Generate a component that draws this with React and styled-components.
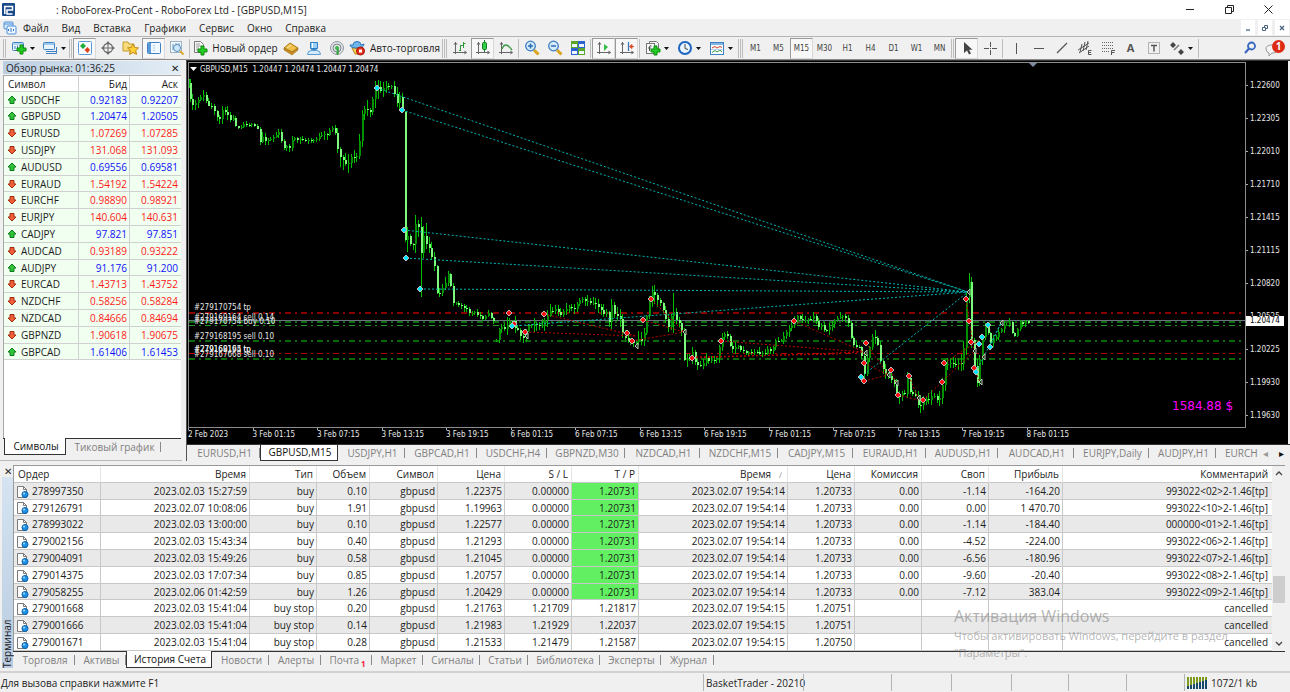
import styled, { createGlobalStyle, css } from "styled-components";

const GlobalStyle = createGlobalStyle`
  * {
    box-sizing: border-box;
  }
  body {
    margin: 0;
    background: #f0f0f0;
    color: #1c1c1c;
    font-family: "Open Sans", "Noto Sans", sans-serif;
    font-size: 10px;
    line-height: 14px;
    overflow: hidden;
  }
  button {
    font: inherit;
    color: inherit;
    background: none;
    border: none;
    padding: 0;
    margin: 0;
    cursor: default;
  }
`;

/* ---------- data ---------- */

const menuItems = ["Файл", "Вид", "Вставка", "Графики", "Сервис", "Окно", "Справка"];
const periods = ["M1", "M5", "M15", "M30", "H1", "H4", "D1", "W1", "MN"];

const quotes = [
  ["USDCHF", "0.92183", "0.92207", true],
  ["GBPUSD", "1.20474", "1.20505", true],
  ["EURUSD", "1.07269", "1.07285", false],
  ["USDJPY", "131.068", "131.093", false],
  ["AUDUSD", "0.69556", "0.69581", true],
  ["EURAUD", "1.54192", "1.54224", false],
  ["EURCHF", "0.98890", "0.98921", false],
  ["EURJPY", "140.604", "140.631", false],
  ["CADJPY", "97.821", "97.851", true],
  ["AUDCAD", "0.93189", "0.93222", false],
  ["AUDJPY", "91.176", "91.200", true],
  ["EURCAD", "1.43713", "1.43752", false],
  ["NZDCHF", "0.58256", "0.58284", false],
  ["NZDCAD", "0.84666", "0.84694", false],
  ["GBPNZD", "1.90618", "1.90675", false],
  ["GBPCAD", "1.61406", "1.61453", true],
];

const chartTabs = [
  ["EURUSD,H1", 73],
  ["GBPUSD,M15", 78],
  ["USDJPY,H1", 67],
  ["GBPCAD,H1", 72],
  ["USDCHF,H4", 70],
  ["GBPNZD,M30", 78],
  ["NZDCAD,H1", 75],
  ["NZDCHF,M15", 78],
  ["CADJPY,M15", 75],
  ["EURAUD,H1", 73],
  ["AUDUSD,H1", 72],
  ["AUDCAD,H1", 76],
  ["EURJPY,Daily", 75],
  ["AUDJPY,H1", 67],
];

const priceLabels = [
  "1.22600", "1.22305", "1.22010", "1.21710", "1.21415", "1.21115",
  "1.20820", "1.20525", "1.20225", "1.19930", "1.19630",
];

const timeLabels = [
  "2 Feb 2023", "3 Feb 01:15", "3 Feb 07:15", "3 Feb 13:15", "3 Feb 19:15",
  "6 Feb 01:15", "6 Feb 07:15", "6 Feb 13:15", "6 Feb 19:15", "7 Feb 01:15",
  "7 Feb 07:15", "7 Feb 13:15", "7 Feb 19:15", "8 Feb 01:15",
];

const columns = [
  ["Ордер", 87],
  ["Время", 149],
  ["Тип", 67],
  ["Объем", 53],
  ["Символ", 68],
  ["Цена", 67],
  ["S / L", 67],
  ["T / P", 67],
  ["Время", 149],
  ["Цена", 67],
  ["Комиссия", 67],
  ["Своп", 67],
  ["Прибыль", 74],
  ["Комментарий", null],
];

const orders = [
  ["278997350", "2023.02.03 15:27:59", "buy", "0.10", "gbpusd", "1.22375", "0.00000", "1.20731", "2023.02.07 19:54:14", "1.20733", "0.00", "-1.14", "-164.20", "993022<02>2-1.46[tp]"],
  ["279126791", "2023.02.07 10:08:06", "buy", "1.91", "gbpusd", "1.19963", "0.00000", "1.20731", "2023.02.07 19:54:14", "1.20733", "0.00", "0.00", "1 470.70", "993022<10>2-1.46[tp]"],
  ["278993022", "2023.02.03 13:00:00", "buy", "0.10", "gbpusd", "1.22577", "0.00000", "1.20731", "2023.02.07 19:54:14", "1.20733", "0.00", "-1.14", "-184.40", "000000<01>2-1.46[tp]"],
  ["279002156", "2023.02.03 15:43:34", "buy", "0.40", "gbpusd", "1.21293", "0.00000", "1.20731", "2023.02.07 19:54:14", "1.20733", "0.00", "-4.52", "-224.00", "993022<06>2-1.46[tp]"],
  ["279004091", "2023.02.03 15:49:26", "buy", "0.58", "gbpusd", "1.21045", "0.00000", "1.20731", "2023.02.07 19:54:14", "1.20733", "0.00", "-6.56", "-180.96", "993022<07>2-1.46[tp]"],
  ["279014375", "2023.02.03 17:07:34", "buy", "0.85", "gbpusd", "1.20757", "0.00000", "1.20731", "2023.02.07 19:54:14", "1.20733", "0.00", "-9.60", "-20.40", "993022<08>2-1.46[tp]"],
  ["279058255", "2023.02.06 01:42:59", "buy", "1.26", "gbpusd", "1.20429", "0.00000", "1.20731", "2023.02.07 19:54:14", "1.20733", "0.00", "-7.12", "383.04", "993022<09>2-1.46[tp]"],
  ["279001668", "2023.02.03 15:41:04", "buy stop", "0.20", "gbpusd", "1.21763", "1.21709", "1.21817", "2023.02.07 19:54:15", "1.20751", "", "", "", "cancelled"],
  ["279001666", "2023.02.03 15:41:04", "buy stop", "0.14", "gbpusd", "1.21983", "1.21929", "1.22037", "2023.02.07 19:54:15", "1.20751", "", "", "", "cancelled"],
  ["279001671", "2023.02.03 15:41:04", "buy stop", "0.28", "gbpusd", "1.21533", "1.21479", "1.21587", "2023.02.07 19:54:15", "1.20750", "", "", "", "cancelled"],
];

const terminalTabs = [
  ["Торговля", 62],
  ["Активы", 51],
  ["История Счета", 86],
  ["Новости", 57],
  ["Алерты", 52],
  ["Почта", 51],
  ["Маркет", 51],
  ["Сигналы", 57],
  ["Статьи", 48],
  ["Библиотека", 72],
  ["Эксперты", 61],
  ["Журнал", 53],
];

// x, y, wick length
const track = [
  [
    [189, 85, 6], [191, 100, 4], [194, 105, 8], [199, 103, 6], [203, 95, 4], [207, 97, 5], [209, 106, 3],
    [213, 107, 3], [218, 117, 4], [221, 118, 4], [224, 112, 5], [228, 110, 6], [231, 118, 3], [236, 119, 3],
    [238, 127, 2], [243, 125, 2], [249, 123, 3], [256, 127, 2], [260, 130, 2], [262, 146, 4], [264, 137, 5],
    [269, 140, 4], [274, 137, 3], [281, 133, 3], [283, 142, 3], [286, 147, 3], [291, 147, 4], [294, 140, 4],
    [303, 140, 3], [313, 141, 3], [319, 137, 3], [329, 135, 5], [332, 127, 2], [336, 130, 3], [338, 133, 8],
    [340, 156, 6], [344, 157, 10], [348, 165, 8], [353, 158, 9], [358, 157, 6], [361, 140, 6], [363, 117, 5],
    [368, 102, 8], [370, 117, 4], [373, 108, 5], [375, 93, 4], [378, 88, 9], [383, 90, 6], [388, 87, 5],
    [393, 87, 4], [396, 93, 4], [399, 103, 6], [402, 93, 8], [404, 112, 4], [406, 240, 3], [409, 233, 10],
    [414, 250, 8], [417, 223, 12], [420, 228, 10], [422, 259, 40], [426, 232, 9], [429, 250, 12],
    [431, 248, 10], [434, 257, 7], [437, 270, 6], [439, 297, 3], [443, 293, 5], [446, 285, 5], [450, 272, 3],
    [453, 290, 3], [455, 302, 3], [460, 303, 3], [467, 310, 4], [473, 313, 3], [480, 315, 3], [485, 318, 4],
    [488, 313, 3], [493, 317, 2], [496, 321, 3],
  ],
  [
    [498, 340, 3], [501, 328, 4], [507, 327, 4], [510, 322, 7], [515, 323, 6], [520, 332, 4], [525, 337, 5],
    [530, 325, 4], [537, 322, 6], [540, 328, 5], [545, 323, 5], [552, 312, 6], [557, 310, 4], [562, 315, 4],
    [567, 308, 5], [577, 309, 4], [582, 300, 3], [587, 302, 5], [597, 303, 5], [603, 310, 5], [605, 315, 6],
    [607, 302, 6], [610, 332, 4], [613, 303, 6], [617, 317, 8], [622, 317, 12], [624, 333, 5], [628, 340, 4],
    [633, 343, 4], [637, 345, 4], [640, 340, 8], [645, 340, 9], [647, 323, 5], [650, 305, 5], [654, 291, 6],
    [658, 298, 8], [663, 303, 5], [667, 318, 4], [670, 328, 5], [673, 313, 6], [675, 313, 22], [680, 322, 6],
    [683, 330, 4], [686, 358, 4], [690, 360, 6], [693, 350, 8], [697, 362, 4], [702, 367, 4], [707, 360, 5],
    [713, 360, 4], [718, 357, 4], [721, 348, 5], [724, 335, 4], [728, 333, 3], [732, 348, 4], [737, 347, 4],
    [742, 348, 3], [747, 352, 3], [757, 352, 3], [765, 355, 4], [770, 347, 5], [773, 352, 3], [778, 340, 5],
    [783, 340, 4], [788, 332, 5], [793, 327, 5], [797, 317, 4], [807, 320, 4], [815, 318, 5], [820, 325, 4],
    [827, 330, 4], [832, 328, 5], [837, 320, 4], [843, 315, 5], [849, 318, 4], [853, 342, 3], [858, 345, 4],
    [863, 352, 4], [865, 382, 6], [868, 357, 4], [870, 357, 4], [873, 335, 6], [877, 337, 8], [880, 348, 3],
    [883, 368, 4], [888, 373, 6], [895, 382, 4], [897, 393, 4], [900, 395, 7], [907, 393, 4], [909, 377, 8],
    [912, 392, 4], [917, 395, 4], [920, 407, 4], [923, 403, 9], [927, 397, 5], [930, 402, 5], [935, 393, 5],
    [939, 403, 4], [943, 395, 7], [946, 365, 5], [952, 363, 5], [957, 362, 8], [963, 365, 8], [966, 343, 8],
    [969, 278, 12], [971, 284, 10], [973, 330, 8], [974, 350, 6], [976, 367, 5], [979, 383, 8], [981, 362, 5],
    [983, 343, 6], [987, 325, 5], [990, 337, 5], [993, 343, 5], [997, 337, 4], [1002, 330, 4],
    [1008, 323, 4], [1012, 322, 3], [1014, 337, 1], [1018, 337, 1], [1020, 320, 3], [1023, 323, 3],
    [1032, 322, 2],
  ],
];

const sells = [
  [509, 313], [514, 324], [525, 332], [544, 314], [627, 333], [632, 341], [643, 320], [651, 299], [692, 358],
  [721, 341], [794, 321], [866, 343], [864, 363], [864, 381], [891, 370], [898, 395], [909, 376], [923, 400],
  [944, 363], [942, 382], [966, 299], [969, 321], [971, 342], [974, 368],
];

const buys = [
  [377, 88], [402, 110], [404, 230], [406, 258], [420, 289], [512, 326], [861, 377], [988, 325], [982, 337],
  [979, 344], [990, 347], [976, 372],
];

const exits = [
  [526, 336], [636, 346], [684, 332], [865, 353], [888, 375], [896, 383], [918, 398], [968, 292], [974, 351],
  [980, 382], [983, 357], [1001, 323],
];

const buyLinks = [
  [377, 88, 968, 292], [402, 110, 968, 292], [404, 230, 968, 292], [406, 258, 968, 292],
  [420, 289, 968, 292], [512, 326, 968, 292], [861, 377, 968, 292], [976, 372, 1001, 323], [990, 347, 1001, 323],
];

const sellLinks = [
  [544, 314, 636, 336], [525, 332, 636, 336], [632, 341, 684, 332], [643, 320, 684, 332], [651, 299, 684, 332],
  [692, 358, 864, 352], [721, 341, 864, 352], [692, 357, 840, 354], [794, 321, 864, 352], [866, 343, 888, 375],
  [864, 363, 888, 375], [864, 381, 888, 375], [891, 370, 896, 383], [898, 395, 918, 400], [909, 376, 918, 398],
  [923, 400, 974, 351], [966, 299, 974, 351], [944, 363, 980, 340], [974, 368, 980, 382],
];

// y, colour, thickness
const levels = [
  [312, "#8c0000", 2],
  [321, "#0b6a0b", 2],
  [325, "#1f9a1f", 1],
  [340, "#0b6a0b", 2],
  [353, "#b80000", 1],
  [358, "#0b6a0b", 2],
];

const orderLabels = [
  [310, "#279170754 tp"], [320, "#279169164 sell 0.14"], [324, "#279170754 buy 0.10"],
  [339, "#279168195 sell 0.10"], [352, "#279169164 tp"], [352, "#279168195 tp"], [357, "#279167668 sell 0.10"],
];

function buildBars() {
  const bars = [];
  const step = 2.686;
  let seed = 11;
  const rand = () => {
    seed = (seed * 16807) % 2147483647;
    return seed / 2147483647;
  };
  track.forEach((points) => {
    let open = points[0][1];
    let k = 0;
    const last = points[points.length - 1][0];
    for (let x = points[0][0]; x <= last; x += step) {
      while (k < points.length - 2 && points[k + 1][0] < x) k++;
      const a = points[k];
      const b = points[k + 1];
      const t = Math.min(1, (x - a[0]) / (b[0] - a[0]));
      const wick = t < 0.5 ? a[2] : b[2];
      const close = a[1] + (b[1] - a[1]) * t + (rand() - 0.5) * 4;
      bars.push({
        x: Math.max(189, Math.round(x) - 2),
        top: Math.min(open, close),
        bottom: Math.max(open, close),
        high: Math.min(open, close) - (0.2 + rand()) * wick,
        low: Math.max(open, close) + (0.2 + rand()) * wick,
        up: close < open,
      });
      open = close;
    }
  });
  return bars;
}

const bars = buildBars();

/* ---------- icons ---------- */

const Icon = ({ children, w = 16, h = 16 }) => (
  <svg width={w} height={h} viewBox={`0 0 ${w} ${h}`} fill="none" aria-hidden="true">
    {children}
  </svg>
);

const Plus = ({ x, y }) => (
  <path
    d={`M${x} ${y}h3v3h3v3h-3v3h-3v-3h-3v-3h3z`}
    fill="#22cc22"
    stroke="#0a8a0a"
    strokeWidth="1"
  />
);

const Caret = () => (
  <svg width="5" height="3" viewBox="0 0 5 3" aria-hidden="true">
    <path d="M0 0h5L2.5 3z" fill="#111" />
  </svg>
);

const AppLogo = () => (
  <Icon w={13} h={13}>
    <rect width="13" height="13" rx="1" fill="#1a4a8a" />
    <path d="M2 3.500h8.500v3.500H5v4h5.500M2.800 3v8" stroke="#fff" strokeWidth="1.500" />
  </Icon>
);

const ChartsIcon = () => (
  <Icon w={14} h={14}>
    <rect x="1" y="1" width="9" height="7" rx="1" fill="#d9ecff" stroke="#4b8fd6" />
    <path d="M1 3h9" stroke="#4b8fd6" />
    <rect x="4" y="5" width="9" height="8" rx="1" fill="#eaf5ff" stroke="#4b8fd6" />
    <path d="M5.500 10V8M8 11V7M10.500 10V8" stroke="#3a78be" />
  </Icon>
);

const NewChartIcon = () => (
  <Icon>
    <rect x="1.500" y="2.500" width="11" height="8" rx="1" fill="#e8f4ff" stroke="#3f82c4" />
    <path d="M2 4h10" stroke="#7db4e6" />
    <path d="M4 6v3M6.500 5.500v2.500" stroke="#3f82c4" />
    <Plus x={9} y={5} />
  </Icon>
);

const ProfilesIcon = () => (
  <Icon>
    <rect x="1.500" y="2.500" width="11" height="7" rx="1" fill="#e8f4ff" stroke="#3f82c4" />
    <rect x="2" y="3" width="10" height="2" fill="#9cc9ee" />
    <path d="M4 13.500h10.500V7M4 11.500h10" stroke="#3f82c4" />
  </Icon>
);

const MarketIcon = () => (
  <Icon>
    <rect x="1.500" y="1.500" width="13" height="13" rx="1" fill="#f8fcff" stroke="#5a9bd8" />
    <path d="M6 3l3 3-3 3-3-3z" fill="#1fae3a" />
    <path d="M10.500 7l2.500 3-2.500 3-3-3z" fill="#e0401c" />
  </Icon>
);

const TargetIcon = () => (
  <Icon>
    <circle cx="8" cy="8" r="4.500" stroke="#6a6a6a" strokeWidth="1.300" />
    <path d="M8 2v12M2 8h12" stroke="#6a6a6a" />
    <path d="M6.500 3L8 1l1.500 2M6.500 13L8 15l1.500-2M3 6.500L1 8l2 1.500M13 6.500L15 8l-2 1.500" fill="#6a6a6a" />
  </Icon>
);

const FolderStarIcon = () => (
  <Icon w={17}>
    <path d="M1 2h5l1 2h5v7H1z" fill="#f6dc7c" stroke="#c79a2c" />
    <path d="M11 4l1.700 3.500 3.800.400-2.800 2.600.800 3.900L11 12.500l-3.500 1.900.800-3.900L5.500 7.900l3.800-.400z" fill="#ffcf3a" stroke="#c08a14" />
  </Icon>
);

const NavigatorIcon = () => (
  <Icon>
    <rect x="1.500" y="2.500" width="13" height="11" rx="1" fill="#f2f9ff" stroke="#3f82c4" />
    <rect x="2" y="3" width="3" height="10" fill="#5c9bd6" />
    <path d="M7 5.500h2M7 8h2M7 10.500h2" stroke="#a9c9e6" />
  </Icon>
);

const TesterIcon = () => (
  <Icon>
    <rect x="1.500" y="1.500" width="11" height="11" fill="#f4f8fb" stroke="#9db4c8" />
    <path d="M4 4v6M7 3v3M10 3v3" stroke="#5b9ad0" />
    <circle cx="8" cy="8" r="3.500" fill="#cfe8fb" stroke="#5289b8" />
    <path d="M11 11l3.500 3.500" stroke="#dba726" strokeWidth="2" />
  </Icon>
);

const NewOrderIcon = () => (
  <Icon>
    <path d="M2.500 1.500h6l3 3v8h-9z" fill="#fafafa" stroke="#777" />
    <path d="M4 4h4M4 6h5M4 8h3M4 10h3" stroke="#999" />
    <Plus x={9} y={6} />
  </Icon>
);

const MetaEditorIcon = () => (
  <Icon>
    <path d="M1 8l6-5 8 5-6 4z" fill="#f0c04a" stroke="#a8761a" />
    <path d="M1 8l8 4 6-4v2l-6 5-8-5z" fill="#c98f22" stroke="#8f6210" strokeWidth="0.500" />
    <path d="M4 8l4-3" stroke="#ffe9a6" />
  </Icon>
);

const CommunityIcon = () => (
  <Icon>
    <path d="M4.500 2.500h7v6h-7z" fill="#9bd0f6" stroke="#2d7fc4" />
    <path d="M6.500 3v5" stroke="#fff" />
    <path d="M8 8v3M5 10h6" stroke="#2d7fc4" strokeWidth="1.500" />
    <path d="M1.500 14.500q0-4 4-4h5q4 0 4 4z" fill="#d4e9fb" stroke="#5c9cd4" />
  </Icon>
);

const SignalIcon = () => (
  <Icon>
    <circle cx="8" cy="8" r="6.500" fill="#dfe3e6" stroke="#8f989e" />
    <circle cx="8" cy="8" r="4" stroke="#7d878d" />
    <path d="M8 8a6 6 0 0 1 0 6.500" stroke="#39a341" strokeWidth="2" />
    <circle cx="8" cy="8" r="2" fill="#3cb44a" />
  </Icon>
);

const RobotIcon = () => (
  <Icon w={17}>
    <path d="M3 8h9l-2 6H6z" fill="#f3cf58" stroke="#b58a1e" />
    <path d="M4 5q0-3.500 4-3.500T12 5l3-1q0 4-7 4T1 5z" fill="#6fb6ea" stroke="#2f78b6" />
    <circle cx="11.500" cy="11" r="4" fill="#e2301c" stroke="#a81408" />
    <rect x="10" y="9.500" width="3" height="3" fill="#fff" />
  </Icon>
);

const Axes = ({ children }) => (
  <Icon>
    <path d="M3.500 2v12M1 12.500h13.500" stroke="#666" />
    <path d="M1.500 4.500l2-2.500 2 2.500zM12.500 10.500l2.500 2-2.500 2z" fill="#666" />
    {children}
  </Icon>
);

const BarsIcon = () => (
  <Axes><path d="M8.500 5v6M7 10.500h1.500M8.500 5.500h3M11.500 2v6M11.500 3.500h2" stroke="#2e9a3c" /></Axes>
);
const CandlesIcon = () => (
  <Axes>
    <path d="M9.500 0v12" stroke="#137a22" />
    <rect x="7.500" y="2.500" width="4" height="7" rx="1" fill="#2fd048" stroke="#137a22" />
  </Axes>
);
const LineIcon = () => (
  <Axes><path d="M4 9c2-5 5-6 10 1" stroke="#3a9a48" strokeWidth="1.300" /></Axes>
);
const ScrollIcon = () => (
  <Axes><path d="M8 4l4 3-4 4z" fill="#2fbf44" /></Axes>
);
const ShiftIcon = () => (
  <Axes>
    <path d="M9.500 2v9" stroke="#3a78be" strokeWidth="1.300" />
    <path d="M15 6.500h-4M13 4.500l-2.500 2 2.500 2z" stroke="#d8502a" fill="#d8502a" />
  </Axes>
);

const ZoomIcon = ({ plus }) => (
  <Icon>
    <path d="M10 10l4.500 4.500" stroke="#d9a520" strokeWidth="3" />
    <circle cx="6.500" cy="6" r="4.800" fill="#d5ecfc" stroke="#3a7cc4" strokeWidth="1.300" />
    <path d={plus ? "M4 6h5M6.500 3.500v5" : "M4 6h5"} stroke="#2f6cb4" strokeWidth="1.500" />
  </Icon>
);

const TileIcon = () => (
  <Icon>
    <rect x="1" y="1" width="7" height="7" fill="#5aa62a" />
    <rect x="8" y="1" width="7" height="7" fill="#2f62d0" />
    <rect x="1" y="8" width="7" height="7" fill="#2f62d0" />
    <rect x="8" y="8" width="7" height="7" fill="#5aa62a" />
    <path d="M2 4h5v3H2zM9 4h5v3H9zM2 11h5v3H2zM9 11h5v3H9z" fill="#eef6ff" />
  </Icon>
);

const IndicatorIcon = () => (
  <Icon>
    <path d="M4.500 3.500v-2h7l2 2v7" stroke="#777" fill="#f4f4f4" />
    <rect x="1.500" y="3.500" width="8" height="10" fill="#fafafa" stroke="#777" />
    <path d="M6.500 6q-2-1-2 1v4M3 8h3" stroke="#555" />
    <Plus x={9} y={6} />
  </Icon>
);

const ClockIcon = () => (
  <Icon>
    <circle cx="8" cy="8" r="6" fill="#eaf5ff" stroke="#1f66c0" strokeWidth="2" />
    <path d="M8 4v4.500l3 1" stroke="#444" />
  </Icon>
);

const TemplateIcon = () => (
  <Icon>
    <rect x="1.500" y="2.500" width="13" height="12" fill="#f8fcff" stroke="#3f82c4" />
    <rect x="2" y="3" width="12" height="2" fill="#7fb6e6" />
    <path d="M3 8l3-1.500 2 1.500 3-1.500 2 1" stroke="#d0452a" />
    <path d="M3 12.500l3-2 2 1.500 3-2 2 2" stroke="#38a04a" />
    <path d="M2 9.500h12" stroke="#bcd8ee" />
  </Icon>
);

const CursorIcon = () => (
  <Icon><path d="M5 2v11l3-2.500 2 4 2-1-2-3.800h3.500z" fill="#444" /></Icon>
);
const CrossIcon = () => (
  <Icon><path d="M8.500 2v5M8.500 10v5M2 8.500h5M10 8.500h5M8 8.500h1" stroke="#555" /></Icon>
);
const VLineIcon = () => <Icon><path d="M8.500 3v11" stroke="#555" /></Icon>;
const HLineIcon = () => <Icon><path d="M3 8.500h10" stroke="#555" /></Icon>;
const TrendIcon = () => <Icon><path d="M3 13L13 3" stroke="#555" strokeWidth="1.200" /></Icon>;
const ChannelIcon = () => (
  <Icon>
    <path d="M1 10l11-7M2 13l10-7M3 12l2-8M6 11l2-9M9 10l2-9" stroke="#555" />
    <path d="M14.500 10.500h-3v4h3M11.500 12.500h2.500" stroke="#555" />
  </Icon>
);
const FiboIcon = () => (
  <Icon>
    <path d="M2 2.500h12M2 5.500h12M2 8.500h12M2 11.500h7" stroke="#666" strokeDasharray="1 1" />
    <path d="M11.500 15v-4.500H15M11.500 12.500h3" stroke="#555" />
  </Icon>
);
const LabelIcon = () => (
  <Icon>
    <rect x="2.500" y="2.500" width="11" height="11" stroke="#777" strokeDasharray="1 1" />
    <path d="M5 5.500h6M8 5.500v6" stroke="#555" strokeWidth="1.500" />
  </Icon>
);
const ArrowsIcon = () => (
  <Icon>
    <path d="M4 2l3 3-3 3-3-3zM12 9l3 3-3 3-3-3z" fill="#444" />
    <path d="M5 10l5-5" stroke="#777" strokeWidth="1.500" />
  </Icon>
);
const SearchIcon = () => (
  <Icon>
    <circle cx="9.500" cy="6" r="3.500" stroke="#3565c0" strokeWidth="1.800" />
    <path d="M7 8.500L3 13" stroke="#3565c0" strokeWidth="2" />
  </Icon>
);
const ChatIcon = () => (
  <Icon w={14} h={14}>
    <path d="M1 6q0-4 6-4t6 4-6 4l-3 3v-3q-3-1-3-4z" fill="#f4f4f4" stroke="#999" />
  </Icon>
);

const TrendArrow = ({ up }) => (
  <Icon w={10} h={10}>
    {up ? (
      <path d="M5 1l4 4H7v3.500H3V5H1z" fill="#2fc43a" stroke="#0d7a1a" />
    ) : (
      <path d="M5 9L1 5h2V1.500h4V5h2z" fill="#f0603a" stroke="#a32a0c" />
    )}
  </Icon>
);

const DocIcon = () => (
  <Icon w={13} h={13}>
    <path d="M1.500 1.500h6l3 3v8h-9z" fill="#fcfcfc" stroke="#7a7a7a" />
    <path d="M7.500 1.500v3h3" stroke="#7a7a7a" />
    <circle cx="9" cy="9.500" r="3" fill="#1c93ea" stroke="#0c5fa6" />
    <circle cx="8" cy="8.500" r="1" fill="#a9dcff" />
  </Icon>
);

const TrafficIcon = () => (
  <Icon w={21} h={12}>
    {[0, 1, 2, 3, 4, 5, 6].map((i) => (
      <g key={i}>
        <rect x={i * 3} y="0" width="2" height={9 - i} fill="#7d9a1e" />
        <rect x={i * 3} y={9 - i} width="2" height={i + 3} fill="#174a6a" />
      </g>
    ))}
  </Icon>
);

/* ---------- layout ---------- */

const Window = styled.div`
  height: 100vh;
  display: flex;
  flex-direction: column;
  background: #f0f0f0;
`;

const TitleBar = styled.header`
  height: 19px;
  display: flex;
  align-items: center;
  padding-left: 2px;
  background: #fff;

  h1 {
    flex: 1;
    margin: 0 0 0 41px;
    font-size: 10px;
    font-weight: 400;
  }
`;

const CaptionButton = styled.button`
  width: 39px;
  height: 19px;
  display: grid;
  place-items: center;

  &:last-child {
    margin-right: 2px;
  }
`;

const MenuBar = styled.nav`
  height: 17px;
  display: flex;
  align-items: center;
  gap: 13px;
  padding-left: 3px;

  svg {
    margin-right: -7px;
  }
  .mdi {
    display: flex;
    gap: 3px;
    margin-left: auto;
    padding-right: 1px;
  }
`;

const MdiButton = styled.button`
  width: 14px;
  height: 15px;
  display: grid;
  place-items: center;
  background: #fff;

  svg {
    margin: 0;
  }
`;

const ToolBar = styled.div`
  height: 24px;
  flex-shrink: 0;
  display: flex;
  align-items: center;
  padding-left: 3px;
  border-top: 1px solid #b4b4b4;
  border-bottom: 1px solid #8a8a8a;
`;

const Grip = styled.span`
  width: 3px;
  height: 19px;
  margin-right: 1px;
  border-left: 1px solid #bdbdbd;
  border-right: 1px solid #bdbdbd;
`;

const Separator = styled.span`
  width: 1px;
  height: 19px;
  margin: 0 1px;
  background: #bdbdbd;
`;

const Tool = styled.button`
  width: ${({ $width }) => $width || 23}px;
  height: 21px;
  flex-shrink: 0;
  display: flex;
  align-items: center;
  justify-content: center;
  gap: 4px;
  white-space: nowrap;
  ${({ $active }) =>
    $active &&
    css`
      background: #f8f8f8;
      border: 1px solid #d8d8d8;
      border-top-color: #9a9a9a;
      border-left-color: #9a9a9a;
    `}
`;

const MenuTool = styled(Tool)`
  width: ${({ $wide }) => ($wide ? 32 : 31)}px;
  gap: 3px;
`;

const Period = styled(Tool)`
  padding-top: 2px;
  font-family: "DejaVu Sans Condensed", "DejaVu Sans", sans-serif;
  font-size: 8px;
  color: #444;
`;

const LetterTool = styled(Tool)`
  font-size: 11px;
  font-weight: 700;
  color: #555;
`;

const SearchTool = styled(Tool)`
  margin-left: auto;
`;

const Notice = styled.button`
  position: relative;
  width: 24px;
  height: 20px;
  margin-right: 5px;

  svg {
    display: block;
    margin: 4px 0 0 4px;
  }
  span {
    position: absolute;
    top: 2px;
    right: 0;
    width: 13px;
    height: 13px;
    border-radius: 50%;
    background: #dc2a14;
    color: #fff;
    font-weight: 700;
    line-height: 13px;
  }
`;

const Workspace = styled.main`
  flex: 1;
  min-height: 0;
  display: flex;
`;

const Dock = styled.aside`
  width: 182px;
  flex-shrink: 0;
  display: flex;
  flex-direction: column;
  padding: 1px 1px 5px 3px;
  margin-right: 4px;
  border-bottom: 1px solid #b8b8b8;
`;

const DockTitle = styled.div`
  height: 13px;
  display: flex;
  align-items: center;
  justify-content: space-between;
  padding: 0 2px 0 3px;
  background: linear-gradient(90deg, #bccfe2, #e3edf6);

  button {
    line-height: 12px;
  }
`;

const DockBody = styled.div`
  flex: 1;
  margin-top: 1px;
  background: #fff;
  border-top: 1px solid #a8a8a8;
  border-left: 1px solid #a8a8a8;
`;

const QuoteTable = styled.table`
  width: 100%;
  table-layout: fixed;
  border-spacing: 0;

  th,
  td {
    padding: 0 2px 0 0;
    text-align: right;
    border-right: 1px solid #d0d0d0;
    border-bottom: 1px solid #d0d0d0;
    white-space: nowrap;
  }
  th:last-child,
  td:last-child {
    border-right: none;
    padding-right: 3px;
  }
  th:first-child,
  td:first-child {
    text-align: left;
    padding-left: 4px;
  }
  th {
    height: 16px;
    font-weight: 400;
  }
  tbody tr {
    height: 17px;
    background: #f0fff0;
  }
  tbody tr:nth-child(5n + 1) {
    height: 16px;
  }
`;

const Price = styled.td`
  color: ${({ $up }) => ($up ? "#1010ff" : "#ff1a1a")};
`;

const SymbolCell = styled.span`
  display: flex;
  align-items: center;
  gap: 4px;
  height: 14px;
  margin-left: -1px;
`;

const TabRow = styled.div`
  display: flex;
  height: 17px;
  flex-shrink: 0;
  border-top: 1px solid #333;
  color: #808080;
`;

const Tab = styled.button`
  position: relative;
  width: ${({ $width }) => $width}px;
  flex-shrink: 0;
  padding-left: 2px;
  white-space: nowrap;
  line-height: 14px;

  &::after {
    content: "";
    position: absolute;
    right: 0;
    top: 3px;
    bottom: 3px;
    border-right: 1px solid #8a8a8a;
  }
  sub {
    color: #f02040;
    font-size: 8px;
    font-weight: 700;
    line-height: 8px;
    margin-left: 2px;
  }
  ${({ $active }) =>
    $active &&
    css`
      background: #fff;
      color: #111;
      border: 1px solid #333;
      border-top: none;
      margin-top: -1px;
      line-height: 16px;
      &::after {
        display: none;
      }
    `}
`;

const DockTabs = styled(TabRow)`
  padding-left: 1px;
`;

const ChartPane = styled.section`
  flex: 1;
  min-width: 0;
  display: flex;
  flex-direction: column;
  border-left: 1px solid #555;
  border-top: 1px solid #333;
  background: #f0f0f0;
`;

const ChartWindow = styled.div`
  flex: 1;
  min-height: 0;
  display: grid;
  grid-template: minmax(0, 1fr) 16px / minmax(0, 1fr) 41px;
  margin-right: 2px;
  padding: 1px 1px 0 1px;
  background: #000;
  color: #e8e8e8;
  font-family: "DejaVu Sans Condensed", "DejaVu Sans", sans-serif;
  font-size: 8px;
  line-height: 12px;
`;

const Plot = styled.svg`
  width: 100%;
  height: 100%;
  display: block;
  border: 1px solid #8c8c8c;

  text {
    fill: #e8e8e8;
    font-size: 8px;
  }
  text.balance {
    fill: #ff00ff;
    font-family: "DejaVu Sans", sans-serif;
    font-size: 12px;
  }
`;

const PriceScale = styled.div`
  position: relative;
  display: flex;
  flex-direction: column;
  justify-content: space-between;
  padding: 18px 0 6px;

  span::before {
    content: "";
    display: inline-block;
    width: 2px;
    height: 1px;
    margin-right: 2px;
    vertical-align: middle;
    background: #aaa;
  }
  mark {
    position: absolute;
    left: 0;
    top: 254px;
    width: 38px;
    padding-left: 4px;
    line-height: 10px;
    background: #fff;
    color: #000;
  }
`;

const TimeScale = styled.div`
  grid-column: 1 / -1;
  display: grid;
  grid-template-columns: repeat(14, minmax(0, 1fr));
  max-width: 903px;

  span {
    padding-top: 1px;
    white-space: nowrap;
    background: linear-gradient(#aaa, #aaa) no-repeat 0 0 / 1px 2px;
  }
`;

const ChartTabs = styled(TabRow)`
  overflow: hidden;

  .more {
    flex: 1;
    padding-left: 9px;
    text-align: left;
    line-height: 14px;
  }
  .scroll {
    width: 17px;
    color: #111;
    line-height: 14px;
  }
  .scroll:disabled {
    color: #999;
  }
`;

const Terminal = styled.section`
  display: flex;
  flex-shrink: 0;
  margin: 4px 5px 0 2px;
  padding-bottom: 3px;
`;

const Strip = styled.div`
  width: 11px;
  display: flex;
  flex-direction: column;
  justify-content: space-between;

  button {
    height: 12px;
    line-height: 8px;
  }
  h2 {
    flex: 1;
    margin: 0;
    font-size: 10px;
    font-weight: 400;
    line-height: 11px;
    writing-mode: vertical-rl;
    transform: rotate(180deg);
    background: linear-gradient(#b8cbe0, #d6e4f1);
  }
`;

const TerminalMain = styled.div`
  flex: 1;
  min-width: 0;
`;

const TableFrame = styled.div`
  display: flex;
  background: #fff;
  border-top: 1px solid #999;
  border-left: 1px solid #999;
`;

const OrderTable = styled.table`
  flex: 1;
  width: 100%;
  table-layout: fixed;
  border-spacing: 0;

  th,
  td {
    padding: 0 2px;
    text-align: right;
    border-right: 1px solid #c8c8c8;
    border-bottom: 1px solid #c8c8c8;
    white-space: nowrap;
  }
  th {
    height: 17px;
    padding: 0 3px;
    font-weight: 400;
    border-right-color: #e4e4e4;
  }
  th:first-child {
    text-align: left;
    padding-left: 4px;
  }
  th:last-child,
  td:last-child {
    padding-right: 4px;
    border-right: none;
  }
  tbody tr {
    height: 17px;
  }
  tbody tr:nth-child(5n + 2) {
    height: 16px;
  }
  tbody tr:nth-child(odd) {
    background: #e9e9e9;
  }
`;

const Cell = styled.td`
  background: ${({ $hit }) => ($hit ? "#62f062" : "transparent")};
`;

const OrderId = styled.span`
  display: flex;
  align-items: center;
  gap: 3px;
  height: 14px;
`;

const SortMark = styled.small`
  margin: 0 2px 0 8px;
  font-size: 8px;
  color: #888;
`;

const ScrollBar = styled.div`
  width: 13px;
  display: flex;
  flex-direction: column;
  align-items: center;
  justify-content: space-between;
  padding: 4px 0;
  background: #f0f0f0;

  i {
    width: 12px;
    height: 27px;
    margin-top: 62px;
    background: #cdcdcd;
  }
`;

const StatusBar = styled.footer`
  height: 21px;
  flex-shrink: 0;
  display: flex;
  align-items: center;
  border-top: 2px solid #d2d2d2;
  padding-left: 1px;
  white-space: nowrap;

  .hint {
    flex: 1;
  }
`;

const StatusCell = styled.span`
  width: ${({ $width }) => $width}px;
  height: 17px;
  display: flex;
  align-items: center;
  gap: 3px;
  padding-left: 2px;
  border-left: 1px solid #b4b4b4;
`;

const Watermark = styled.div`
  position: absolute;
  right: 54px;
  bottom: 31px;
  width: 282px;
  color: rgba(130, 130, 130, 0.6);
  font-size: 11px;
  line-height: 17px;
  pointer-events: none;

  strong {
    display: block;
    font-size: 16px;
    font-weight: 400;
    line-height: 22px;
  }
  p {
    margin: 0;
  }
`;

/* ---------- parts ---------- */

const Marker = ({ x, y, color }) => (
  <g shapeRendering="crispEdges">
    <path d={`M${x - 1} ${y - 3}h2v1h1v1h1v2h-1v1h-1v1h-2v-1h-1v-1h-1v-2h1v-1h1z`} fill="#b8b8b8" />
    <path d={`M${x - 1} ${y - 2}h2v1h1v2h-1v1h-2v-1h-1v-2h1z`} fill={color} />
  </g>
);

const Links = ({ items, color, dash }) => (
  <g stroke={color} strokeDasharray={dash}>
    {items.map(([x1, y1, x2, y2], i) => (
      <line key={i} x1={x1} y1={y1} x2={x2} y2={y2} />
    ))}
  </g>
);

const PriceChart = () => (
  <Plot role="img" aria-label="GBPUSD,M15">
    <g transform="translate(-189 -63)">
      <path d="M190 67h7l-3.500 4z" fill="#fff" />
      <path d="M1029 63h8l-4 4z" fill="#7c8ba0" />
      <g shapeRendering="crispEdges">
        <rect x="189" y="320" width="100%" height="1" fill="#6a7386" />
        {levels.map(([y, color, thickness]) => (
          <line
            key={y}
            x1="189"
            x2="1246"
            y1={y + thickness / 2}
            y2={y + thickness / 2}
            stroke={color}
            strokeWidth={thickness}
            strokeDasharray="6 4 2 4"
          />
        ))}
        {bars.map((b, i) => (
          <g key={i}>
            <rect x={b.x} y={b.high} width="1" height={b.low - b.high} fill="#00c000" />
            <rect
              x={b.x}
              y={b.top}
              width="2"
              height={Math.max(1, b.bottom - b.top)}
              fill={b.up ? "#009000" : "#7dfa7d"}
            />
          </g>
        ))}
      </g>
      <Links items={buyLinks} color="#00b4b4" dash="2 2" />
      <Links items={sellLinks} color="#b80000" dash="2 2" />
      {exits.map(([x, y], i) => (
        <path key={i} d={`M${x + 2} ${y - 3}v6l-3-3z`} stroke="#b8c8b8" fill="#123012" />
      ))}
      {sells.map(([x, y], i) => (
        <Marker key={i} x={x} y={y} color="#ff1010" />
      ))}
      {buys.map(([x, y], i) => (
        <Marker key={i} x={x} y={y} color="#00e8ff" />
      ))}
      <text x="200" y="72">GBPUSD,M15&nbsp; 1.20447 1.20474 1.20447 1.20474</text>
      {orderLabels.map(([y, label]) => (
        <text key={label} x="194" y={y}>{label}</text>
      ))}
      <text className="balance" x="1172" y="410">1584.88 $</text>
    </g>
  </Plot>
);

const MarketWatch = () => (
  <Dock>
    <DockTitle>
      Обзор рынка: 01:36:25
      <button type="button" aria-label="Закрыть">✕</button>
    </DockTitle>
    <DockBody>
      <QuoteTable>
        <colgroup>
          <col style={{ width: 75 }} />
          <col style={{ width: 51 }} />
          <col />
        </colgroup>
        <thead>
          <tr>
            <th>Символ</th>
            <th>Бид</th>
            <th>Аск</th>
          </tr>
        </thead>
        <tbody>
          {quotes.map(([symbol, bid, ask, up]) => (
            <tr key={symbol}>
              <td>
                <SymbolCell>
                  <TrendArrow up={up} />
                  {symbol}
                </SymbolCell>
              </td>
              <Price $up={up}>{bid}</Price>
              <Price $up={up}>{ask}</Price>
            </tr>
          ))}
        </tbody>
      </QuoteTable>
    </DockBody>
    <DockTabs>
      <Tab type="button" $width={62} $active>Символы</Tab>
      <Tab type="button" $width={95}>Тиковый график</Tab>
    </DockTabs>
  </Dock>
);

const Tools = () => (
  <ToolBar role="toolbar">
    <Grip />
    <MenuTool type="button" aria-label="Новый график"><NewChartIcon /><Caret /></MenuTool>
    <MenuTool type="button" aria-label="Профили"><ProfilesIcon /><Caret /></MenuTool>
    <Grip />
    <Tool type="button" $active aria-label="Обзор рынка"><MarketIcon /></Tool>
    <Tool type="button" aria-label="Окно данных"><TargetIcon /></Tool>
    <Tool type="button" aria-label="Навигатор"><FolderStarIcon /></Tool>
    <Tool type="button" $active aria-label="Терминал"><NavigatorIcon /></Tool>
    <Tool type="button" aria-label="Тестер стратегий"><TesterIcon /></Tool>
    <Separator />
    <Tool type="button" $width={88}><NewOrderIcon />Новый ордер</Tool>
    <Tool type="button" aria-label="MetaEditor"><MetaEditorIcon /></Tool>
    <Tool type="button" aria-label="Сообщество"><CommunityIcon /></Tool>
    <Tool type="button" aria-label="Сигналы"><SignalIcon /></Tool>
    <Tool type="button" $width={93}><RobotIcon />Авто-торговля</Tool>
    <Separator />
    <Grip />
    <Tool type="button" aria-label="Бары"><BarsIcon /></Tool>
    <Tool type="button" $active aria-label="Свечи"><CandlesIcon /></Tool>
    <Tool type="button" aria-label="Линия"><LineIcon /></Tool>
    <Separator />
    <Tool type="button" aria-label="Увеличить"><ZoomIcon plus /></Tool>
    <Tool type="button" aria-label="Уменьшить"><ZoomIcon /></Tool>
    <Tool type="button" aria-label="Окна мозаикой"><TileIcon /></Tool>
    <Separator />
    <Tool type="button" $active aria-label="Автопрокрутка"><ScrollIcon /></Tool>
    <Tool type="button" $active aria-label="Сдвиг графика"><ShiftIcon /></Tool>
    <Separator />
    <MenuTool type="button" $wide aria-label="Индикаторы"><IndicatorIcon /><Caret /></MenuTool>
    <MenuTool type="button" $wide aria-label="Периоды"><ClockIcon /><Caret /></MenuTool>
    <MenuTool type="button" $wide aria-label="Шаблоны"><TemplateIcon /><Caret /></MenuTool>
    <Separator />
    <Grip />
    {periods.map((p) => (
      <Period type="button" key={p} $active={p === "M15"}>{p}</Period>
    ))}
    <Grip />
    <Tool type="button" $active aria-label="Курсор"><CursorIcon /></Tool>
    <Tool type="button" aria-label="Перекрестие"><CrossIcon /></Tool>
    <Separator />
    <Tool type="button" aria-label="Вертикальная линия"><VLineIcon /></Tool>
    <Tool type="button" aria-label="Горизонтальная линия"><HLineIcon /></Tool>
    <Tool type="button" aria-label="Трендовая линия"><TrendIcon /></Tool>
    <Tool type="button" aria-label="Канал"><ChannelIcon /></Tool>
    <Tool type="button" aria-label="Фибоначчи"><FiboIcon /></Tool>
    <LetterTool type="button">A</LetterTool>
    <Tool type="button" aria-label="Метка"><LabelIcon /></Tool>
    <MenuTool type="button" $wide aria-label="Стрелки"><ArrowsIcon /><Caret /></MenuTool>
    <Separator />
    <SearchTool type="button" aria-label="Поиск"><SearchIcon /></SearchTool>
    <Notice type="button" aria-label="Уведомления"><ChatIcon /><span>1</span></Notice>
  </ToolBar>
);

const History = () => (
  <Terminal>
    <Strip>
      <button type="button" aria-label="Закрыть">✕</button>
      <h2>Терминал</h2>
    </Strip>
    <TerminalMain>
      <TableFrame>
        <OrderTable>
          <colgroup>
            {columns.map(([, width], i) => (
              <col key={i} style={width ? { width } : undefined} />
            ))}
          </colgroup>
          <thead>
            <tr>
              {columns.map(([name], i) => (
                <th key={i}>
                  {name}
                  {i === 8 && <SortMark>∕</SortMark>}
                </th>
              ))}
            </tr>
          </thead>
          <tbody>
            {orders.map((row) => (
              <tr key={row[0]}>
                <td>
                  <OrderId><DocIcon />{row[0]}</OrderId>
                </td>
                {row.slice(1).map((value, i) => (
                  <Cell key={i} $hit={i === 6 && row[2] === "buy"}>{value}</Cell>
                ))}
              </tr>
            ))}
          </tbody>
        </OrderTable>
        <ScrollBar>
          <Icon w={8} h={6}><path d="M1 5l3-3 3 3" stroke="#444" strokeWidth="1.300" /></Icon>
          <i />
          <Icon w={8} h={6}><path d="M1 1l3 3 3-3" stroke="#444" strokeWidth="1.300" /></Icon>
        </ScrollBar>
      </TableFrame>
      <TabRow>
        {terminalTabs.map(([name, width], i) => (
          <Tab type="button" key={name} $width={width} $active={i === 2}>
            {name}
            {name === "Почта" && <sub>1</sub>}
          </Tab>
        ))}
      </TabRow>
    </TerminalMain>
  </Terminal>
);

const App = () => (
  <Window>
    <GlobalStyle />
    <TitleBar>
      <AppLogo />
      <h1>: RoboForex-ProCent - RoboForex Ltd - [GBPUSD,M15]</h1>
      <CaptionButton type="button" aria-label="Свернуть">
        <Icon w={9} h={9}><path d="M0 4.500h8" stroke="#222" /></Icon>
      </CaptionButton>
      <CaptionButton type="button" aria-label="Развернуть">
        <Icon w={9} h={9}><path d="M.500 2.500h6v6h-6zM2.500 2.500v-2h6v6h-2" stroke="#222" /></Icon>
      </CaptionButton>
      <CaptionButton type="button" aria-label="Закрыть окно">
        <Icon w={9} h={9}><path d="M.500.500l8 8M8.500.500l-8 8" stroke="#222" /></Icon>
      </CaptionButton>
    </TitleBar>
    <MenuBar>
      <ChartsIcon />
      {menuItems.map((item) => (
        <button type="button" key={item}>{item}</button>
      ))}
      <div className="mdi">
        <MdiButton type="button" aria-label="Свернуть график">
          <Icon w={6} h={6}><path d="M1 5h4" stroke="#4c6480" strokeWidth="1.300" /></Icon>
        </MdiButton>
        <MdiButton type="button" aria-label="Восстановить график">
          <Icon w={6} h={6}><path d="M.500 2.500h3v3h-3zM2.500 2v-1.500h3v3h-2" stroke="#4c6480" /></Icon>
        </MdiButton>
        <MdiButton type="button" aria-label="Закрыть график">
          <Icon w={6} h={6}><path d="M1 1l4 4M5 1L1 5" stroke="#4c6480" strokeWidth="1.300" /></Icon>
        </MdiButton>
      </div>
    </MenuBar>
    <Tools />
    <Workspace>
      <MarketWatch />
      <ChartPane>
        <ChartWindow>
          <PriceChart />
          <PriceScale>
            {priceLabels.map((p) => (
              <span key={p}>{p}</span>
            ))}
            <mark>1.20474</mark>
          </PriceScale>
          <TimeScale>
            {timeLabels.map((t) => (
              <span key={t}>{t}</span>
            ))}
          </TimeScale>
        </ChartWindow>
        <ChartTabs>
          {chartTabs.map(([name, width], i) => (
            <Tab type="button" key={name} $width={width} $active={i === 1}>{name}</Tab>
          ))}
          <button type="button" className="more">EURCH</button>
          <button type="button" className="scroll" disabled aria-label="Назад">◂</button>
          <button type="button" className="scroll" aria-label="Вперед">▸</button>
        </ChartTabs>
      </ChartPane>
    </Workspace>
    <History />
    <StatusBar>
      <span className="hint">Для вызова справки нажмите F1</span>
      <StatusCell $width={100}>BasketTrader - 20210</StatusCell>
      <StatusCell $width={88} />
      <StatusCell $width={60} />
      <StatusCell $width={60} />
      <StatusCell $width={57} />
      <StatusCell $width={58} />
      <StatusCell $width={58} />
      <StatusCell $width={106}><TrafficIcon />1072/1 kb</StatusCell>
    </StatusBar>
    <Watermark>
      <strong>Активация Windows</strong>
      <p>Чтобы активировать Windows, перейдите в раздел "Параметры".</p>
    </Watermark>
  </Window>
);

export default App;
